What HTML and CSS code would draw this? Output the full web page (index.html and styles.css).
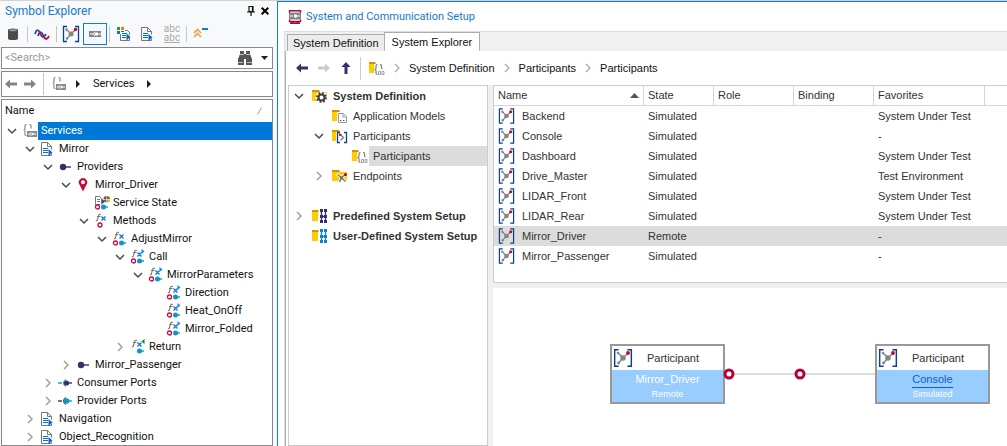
FILE: index.html
```html
<!DOCTYPE html>
<html lang="en">
<head>
<meta charset="utf-8">
<meta name="viewport" content="width=device-width, initial-scale=1">
<title>System and Communication Setup</title>
<link rel="stylesheet" href="styles.css">
</head>
<body>
<svg class="sprite" aria-hidden="true">
  <symbol id="open" viewBox="0 0 12 12"><path d="M2 4l4 4 4-4" fill="none" stroke="#4a4a4a" stroke-width="1.5"/></symbol>
  <symbol id="closed" viewBox="0 0 12 12"><path d="M4 2l4 4-4 4" fill="none" stroke="#a0a0a0" stroke-width="1.5"/></symbol>
  <symbol id="plug" viewBox="0 0 16 16"><rect x="2" y="5" width="12" height="6" fill="#858585"/><path d="M3 8h3M11 8h3" stroke="#fff"/><path d="M8 6a2.200 2.200 0 0 0 0 4" fill="none" stroke="#fff"/><circle cx="9.500" cy="8" r="1.700" fill="#fff"/></symbol>
  <symbol id="service" viewBox="0 0 16 16"><path d="M4.500 1.500H4q-1 0-1 1v3q0 1.500-1.500 1.500Q3 7 3 8.500v3q0 1 1 1h.5M7.500 1.500H8q1 0 1 1v3" fill="none" stroke="#8a8a8a" stroke-width="1.2"/><rect x="5" y="8" width="10" height="6" fill="#8a8a8a"/><path d="M6 11h2M12 11h2" stroke="#fff"/><path d="M9.500 9.500a1.500 1.500 0 0 0 0 3" fill="none" stroke="#fff" stroke-width=".8"/><circle cx="10.700" cy="11" r="1.200" fill="#fff"/></symbol>
  <symbol id="doc" viewBox="0 0 16 16"><path d="M1.500 1.500h6l4 4v3M11.500 13v1.500h-10v-13M7.500 1.500v4h4" fill="none" stroke="#777"/><path d="M3 7.500h5M3 9.500h5M3 11.500h5" stroke="#0078d0"/><path d="M8.500 8v7l4-3.500z" fill="#0b62c4"/></symbol>
  <symbol id="provider" viewBox="0 0 16 16"><circle cx="5" cy="8" r="3.200" fill="#34316b"/><path d="M5 8h8" stroke="#34316b" stroke-width="1.400"/></symbol>
  <symbol id="pin" viewBox="0 0 16 16"><path d="M7 14.500L3.700 8a4.200 4.200 0 1 1 6.600 0z" fill="#c80a38"/><circle cx="7" cy="5.300" r="2" fill="#fff"/></symbol>
  <symbol id="ring" viewBox="0 0 16 16"><circle cx="3.500" cy="12" r="2" fill="#fff" stroke="#c80a45" stroke-width="1.300"/></symbol>
  <symbol id="dot" viewBox="0 0 16 16"><circle cx="9.500" cy="12" r="2.500" fill="#0b98c8"/><path d="M8 12h6" stroke="#0b98c8" stroke-width="1.400"/></symbol>
  <symbol id="fx" viewBox="0 0 16 16"><path d="M7 1.500q-2-1-2.500 1.300L3.500 6.500q-.5 1.700-1.700 1.200M3 3.500h3.500" fill="none" stroke="#777" stroke-width="1.100"/><path d="M7.500 3.500l4 4M11.500 3.500l-4 4" stroke="#1979ca" stroke-width="1.400"/></symbol>
  <symbol id="state" viewBox="0 0 16 16"><path d="M6 9.500H1.500v-8h4l2 2v6M3 4.500h3M3 6.500h3" fill="none" stroke="#777"/><path d="M8 4v5l3-2.500z" fill="#444"/><path d="M12.500 1v3h-3a3 3 0 0 1 3-3z" fill="#e22"/><path d="M13 1v3h3a3 3 0 0 0-3-3z" fill="#2a9a2a"/><path d="M12.500 7.500v-3h-3a3 3 0 0 0 3 3z" fill="#1979ca"/><path d="M13 7.500v-3h3a3 3 0 0 1-3 3z" fill="#fa0"/><use href="#ring"/><use href="#dot"/></symbol>
  <symbol id="method" viewBox="0 0 16 16"><use href="#fx"/><circle cx="6" cy="12" r="2" fill="#fff" stroke="#c80a45" stroke-width="1.300"/></symbol>
  <symbol id="call" viewBox="0 0 16 16"><use href="#fx"/><use href="#ring"/><use href="#dot"/></symbol>
  <symbol id="param" viewBox="0 0 16 16"><use href="#call"/><path d="M11.500 0v5l3-2.500z" fill="#0090f0"/></symbol>
  <symbol id="return" viewBox="0 0 16 16"><use href="#fx"/><use href="#dot"/><path d="M14.500 0v5l-3-2.500z" fill="#078a07"/></symbol>
  <symbol id="cport" viewBox="0 0 16 16"><path d="M0 8h4" stroke="#0b98c8" stroke-width="1.400"/><path d="M8 4.500a3.700 3.700 0 0 0 0 7" fill="none" stroke="#0b98c8"/><circle cx="8.500" cy="8" r="2.600" fill="#34316b"/><path d="M8 8h6" stroke="#34316b" stroke-width="1.400"/></symbol>
  <symbol id="pport" viewBox="0 0 16 16"><path d="M0 8h4" stroke="#34316b" stroke-width="1.400"/><path d="M8 4.500a3.700 3.700 0 0 0 0 7" fill="none" stroke="#34316b"/><circle cx="8.500" cy="8" r="2.800" fill="#0b98c8"/><path d="M8 8h6" stroke="#0b98c8" stroke-width="1.400"/></symbol>
  <symbol id="part" viewBox="0 0 18 18"><path d="M5 1.500H1.500v15H5M13 1.500h3.500v15H13" fill="none" stroke="#0b3f91" stroke-width="1.300"/><path d="M4.500 4.500L9 8.700l-4 5M9 8.700l4.500-4" fill="none" stroke="#858585" stroke-width="1.300"/><circle cx="9" cy="9" r="2.500" fill="#858585"/><circle cx="4.500" cy="4.500" r="1.200" fill="#858585"/><circle cx="5" cy="13.500" r="1.300" fill="#858585"/><circle cx="13.500" cy="4.500" r="1.700" fill="#c0052f"/></symbol>
  <symbol id="folder" viewBox="0 0 16 16"><path d="M0 2h7l1 2h7v9H0z" fill="#fc0"/><path d="M0 2h7l1 2H0z" fill="#cb9500"/></symbol>
  <symbol id="half" viewBox="0 0 16 16"><path d="M0 2h6v11H0z" fill="#fc0"/><path d="M0 2h6l1 2H0z" fill="#cb9500"/></symbol>
  <symbol id="fgear" viewBox="0 0 16 16"><use href="#folder"/><circle cx="9.500" cy="9.500" r="6" fill="#fff"/><circle cx="9.500" cy="9.500" r="4.600" fill="none" stroke="#444" stroke-width="2" stroke-dasharray="1.800 1.810"/><circle cx="9.500" cy="9.500" r="3" fill="none" stroke="#444" stroke-width="2.200"/></symbol>
  <symbol id="fmodel" viewBox="0 0 16 16"><use href="#folder"/><path d="M5 4h11v11H5z" fill="#fff"/><path d="M6.500 5.500h5l3 3v6h-8z" fill="#fff" stroke="#999"/><path d="M11 5.500V9h3.500" fill="none" stroke="#999"/><path d="M8 12h1.500v1H8zM11 12h1.500v1H11z" fill="#555"/></symbol>
  <symbol id="fpart" viewBox="0 0 16 16"><use href="#folder"/><path d="M4 4h12v11H4z" fill="#fff"/><path d="M8 4.500H5.500v10H8M12 4.500h2.500v10H12" fill="none" stroke="#0b3f91" stroke-width="1.300"/><path d="M8 6.500l3.500 3-3 3" fill="none" stroke="#888" stroke-width="1.500"/><circle cx="8.200" cy="6.700" r="1.300" fill="#c0052f"/></symbol>
  <symbol id="fbrace" viewBox="0 0 16 16"><use href="#half"/><path d="M5 4h10v11H5z" fill="#fff"/><path d="M8.500 4.500q-1.500 0-1.500 1.500v2q0 1-1 1.500 1 .5 1 1.500v2q0 1.500 1.500 1.500M11 4.500q1.500 0 1.500 1.500v1.500q0 1 1 1.500" fill="none" stroke="#8a8a8a" stroke-width="1.300"/><path d="M9.500 11.500h2v3h-2zM13 11.500h2v3h-2z" fill="none" stroke="#999" stroke-width=".9"/></symbol>
  <symbol id="fend" viewBox="0 0 16 16"><use href="#folder"/><path d="M5 6l4.500 3.500L13 7M9.500 9.500L7.500 14M9.500 9.500l4.500 4" stroke="#fff" stroke-width="3" fill="none"/><path d="M5.500 6.500l4 3L14 6M9.500 9.500L7.500 14M9.500 9.500l4 4" stroke="#777" stroke-width="1.400" fill="none"/><circle cx="9.500" cy="10" r="1.700" fill="#777"/><circle cx="13.500" cy="6.500" r="1.600" fill="#c0052f"/></symbol>
  <symbol id="fnet" viewBox="0 0 16 16"><use href="#half"/><path d="M9.500 2v13M13.500 2v13M8 8.500h7" stroke="currentColor" stroke-width="1.300"/><path d="M8 1h3v3H8zM12 1h3v3h-3zM8 7h3v3H8zM12 7h3v3h-3zM8 12h3v3H8zM12 12h3v3h-3z" fill="currentColor"/></symbol>
  <symbol id="arrow" viewBox="0 0 12 12"><path d="M0 6l5-4.500v3h7v3H5v3z" fill="currentColor"/></symbol>
  <symbol id="sep" viewBox="0 0 8 12"><path d="M2 2l4 4-4 4" fill="none" stroke="#aaa" stroke-width="1.300"/></symbol>
  <symbol id="tri" viewBox="0 0 8 8"><path d="M2 0v8l4-4z" fill="#1c1c2c"/></symbol>
</svg>

<main class="app">
  <aside class="explorer">
    <header class="explorer-title">
      <h2>Symbol Explorer</h2>
      <button class="bare" aria-label="Pin"><svg width="8" height="10" viewBox="0 0 8 10"><path d="M2 .5h4v5H2zM0 6h8M4 6v4M5.500.5v5" fill="none" stroke="#111" stroke-width="1.200"/></svg></button>
      <button class="bare" aria-label="Close"><svg width="8" height="8" viewBox="0 0 8 8"><path d="M.7.700l6.600 6.600M7.300.7L.7 7.300" stroke="#000" stroke-width="2"/></svg></button>
    </header>
    <div class="tools">
      <button class="tool" aria-label="Database"><svg width="16" height="16" viewBox="0 0 16 16"><path d="M3 4q0-1.500 5-1.500T13 4v8.500q0 1.500-5 1.500t-5-1.500z" fill="#4a4a4a"/><ellipse cx="8" cy="4.200" rx="4" ry="1" fill="#999"/></svg></button>
      <i class="rule"></i>
      <button class="tool" aria-label="Signals"><svg width="16" height="16" viewBox="0 0 16 16"><path d="M4 10c2-6 4-4 5.500 0s3.500 4 5.500 0" fill="none" stroke="#c0052f" stroke-width="1.800"/><path d="M1 8c2-6 4-4 5.500 0s3.500 4 5.500 0" fill="none" stroke="#1456a5" stroke-width="1.800"/></svg></button>
      <i class="rule"></i>
      <button class="tool" aria-label="Participants"><svg width="18" height="18"><use href="#part"/></svg></button>
      <button class="tool pressed" aria-label="Services" aria-pressed="true"><svg width="16" height="16"><use href="#plug"/></svg></button>
      <i class="rule"></i>
      <button class="tool" aria-label="Grouped definitions"><svg width="16" height="16" viewBox="0 0 16 16"><path d="M4.500 8v6.500h9V12M9 4.500h2.500l2 2V9" fill="none" stroke="#777"/><path d="M1 1h3v3H1z" fill="#2a9a2a"/><path d="M5 1h3v3H5z" fill="#f08000"/><path d="M1 5h3v3H1z" fill="#0078d0"/><path d="M5 5.500h3M6 7.500h5M6 9.500h4M6 11.500h4" stroke="#0078d0"/><path d="M10.500 7.500v7l4-3.500z" fill="#0b62c4"/></svg></button>
      <button class="tool" aria-label="Definitions"><svg width="16" height="16"><use href="#doc"/></svg></button>
      <button class="tool abc" aria-label="Display names"><span>abc</span><span class="under">abc</span></button>
      <i class="rule"></i>
      <button class="tool" aria-label="Collapse all"><svg width="18" height="16" viewBox="0 0 18 16"><path d="M2 7l3.500-3.500L9 7M2 11l3.500-3.500L9 11" fill="none" stroke="#f8a040" stroke-width="1.700"/><path d="M10 2h6v2h-6z" fill="#1979ca"/></svg></button>
    </div>
    <div class="search">
      <input type="text" aria-label="Search" placeholder="&lt;Search&gt;">
      <button class="bare" aria-label="Find"><svg width="16" height="14" viewBox="0 0 16 14"><path d="M3 0h4v3h2V0h4v3l2 5v6H9V8H7v6H1V8l2-5z" fill="#555"/><path d="M3 3.500h4M9 3.500h4M1 11.500h5M10 11.500h5" stroke="#bbb"/></svg></button>
      <button class="bare" aria-label="Search options"><svg width="8" height="4" viewBox="0 0 8 4"><path d="M0 0h7L3.500 4z" fill="#222"/></svg></button>
    </div>
    <nav class="path" aria-label="Symbol path">
      <button class="bare" aria-label="Back"><svg class="gray" width="12" height="12"><use href="#arrow"/></svg></button>
      <button class="bare" aria-label="Forward"><svg class="gray flip" width="12" height="12"><use href="#arrow"/></svg></button>
      <i class="rule"></i>
      <svg width="16" height="16"><use href="#service"/></svg>
      <svg width="8" height="8"><use href="#tri"/></svg>
      <a href="#services">Services</a>
      <svg width="8" height="8"><use href="#tri"/></svg>
    </nav>
    <section class="symbols">
      <header><span>Name</span><svg width="5" height="8" viewBox="0 0 5 8"><path d="M.5 7.500l4-7" stroke="#999"/></svg></header>
      <ul class="tree">
        <li><div class="node picked" id="services"><button class="bare twist" aria-label="Collapse Services"><svg><use href="#open"/></svg></button><svg class="icon"><use href="#service"/></svg><span>Services</span></div>
        <ul>
          <li><div class="node"><button class="bare twist" aria-label="Collapse Mirror"><svg><use href="#open"/></svg></button><svg class="icon"><use href="#doc"/></svg><span>Mirror</span></div>
          <ul>
            <li><div class="node"><button class="bare twist" aria-label="Collapse Providers"><svg><use href="#open"/></svg></button><svg class="icon"><use href="#provider"/></svg><span>Providers</span></div>
            <ul>
              <li><div class="node"><button class="bare twist" aria-label="Collapse Mirror_Driver"><svg><use href="#open"/></svg></button><svg class="icon"><use href="#pin"/></svg><span>Mirror_Driver</span></div>
              <ul>
                <li><div class="node"><i class="twist"></i><svg class="icon"><use href="#state"/></svg><span>Service State</span></div></li>
                <li><div class="node"><button class="bare twist" aria-label="Collapse Methods"><svg><use href="#open"/></svg></button><svg class="icon"><use href="#method"/></svg><span>Methods</span></div>
                <ul>
                  <li><div class="node"><button class="bare twist" aria-label="Collapse AdjustMirror"><svg><use href="#open"/></svg></button><svg class="icon"><use href="#call"/></svg><span>AdjustMirror</span></div>
                  <ul>
                    <li><div class="node"><button class="bare twist" aria-label="Collapse Call"><svg><use href="#open"/></svg></button><svg class="icon"><use href="#param"/></svg><span>Call</span></div>
                    <ul>
                      <li><div class="node"><button class="bare twist" aria-label="Collapse MirrorParameters"><svg><use href="#open"/></svg></button><svg class="icon"><use href="#param"/></svg><span>MirrorParameters</span></div>
                      <ul>
                        <li><div class="node"><i class="twist"></i><svg class="icon"><use href="#param"/></svg><span>Direction</span></div></li>
                        <li><div class="node"><i class="twist"></i><svg class="icon"><use href="#param"/></svg><span>Heat_OnOff</span></div></li>
                        <li><div class="node"><i class="twist"></i><svg class="icon"><use href="#param"/></svg><span>Mirror_Folded</span></div></li>
                      </ul></li>
                    </ul></li>
                    <li><div class="node"><button class="bare twist" aria-label="Expand Return"><svg><use href="#closed"/></svg></button><svg class="icon"><use href="#return"/></svg><span>Return</span></div></li>
                  </ul></li>
                </ul></li>
              </ul></li>
              <li><div class="node"><button class="bare twist" aria-label="Expand Mirror_Passenger"><svg><use href="#closed"/></svg></button><svg class="icon"><use href="#provider"/></svg><span>Mirror_Passenger</span></div></li>
            </ul></li>
            <li><div class="node"><button class="bare twist" aria-label="Expand Consumer Ports"><svg><use href="#closed"/></svg></button><svg class="icon"><use href="#cport"/></svg><span>Consumer Ports</span></div></li>
            <li><div class="node"><button class="bare twist" aria-label="Expand Provider Ports"><svg><use href="#closed"/></svg></button><svg class="icon"><use href="#pport"/></svg><span>Provider Ports</span></div></li>
          </ul></li>
          <li><div class="node"><button class="bare twist" aria-label="Expand Navigation"><svg><use href="#closed"/></svg></button><svg class="icon"><use href="#doc"/></svg><span>Navigation</span></div></li>
          <li><div class="node"><button class="bare twist" aria-label="Expand Object_Recognition"><svg><use href="#closed"/></svg></button><svg class="icon"><use href="#doc"/></svg><span>Object_Recognition</span></div></li>
        </ul></li>
      </ul>
    </section>
  </aside>

  <section class="setup">
    <header class="setup-title">
      <svg width="14" height="14" viewBox="0 0 14 14"><path d="M1.500 3V.7h11V3M1.500 9.500v2h11v-2M4.500 11.500v2M9.500 11.500v2M2 13.300h10" fill="none" stroke="#a00a3c" stroke-width="1.400"/><path d="M1 2.500h12v7H1z" fill="#858585"/><path d="M2 6h3M9 6h3" stroke="#fff"/><circle cx="7.500" cy="6" r="1.700" fill="#fff"/></svg>
      <h1>System and Communication Setup</h1>
    </header>
    <div class="work">
      <div class="tabs" role="tablist">
        <button class="tab" role="tab" aria-selected="false">System Definition</button>
        <button class="tab current" role="tab" aria-selected="true">System Explorer</button>
      </div>
      <div class="page">
        <nav class="crumbs" aria-label="Breadcrumb">
          <div class="moves">
            <button class="bare" aria-label="Back"><svg class="navy" width="12" height="12"><use href="#arrow"/></svg></button>
            <button class="bare" aria-label="Forward"><svg class="pale flip" width="12" height="12"><use href="#arrow"/></svg></button>
            <button class="bare" aria-label="Up"><svg class="navy up" width="12" height="12"><use href="#arrow"/></svg></button>
          </div>
          <i class="rule"></i>
          <svg width="16" height="16"><use href="#fbrace"/></svg>
          <svg width="8" height="12"><use href="#sep"/></svg>
          <a href="#definition">System Definition</a>
          <svg width="8" height="12"><use href="#sep"/></svg>
          <a href="#participants">Participants</a>
          <svg width="8" height="12"><use href="#sep"/></svg>
          <a href="#list">Participants</a>
        </nav>
        <div class="panes">
          <ul class="tree folders">
            <li><div class="node strong" id="definition"><button class="bare twist" aria-label="Collapse System Definition"><svg><use href="#open"/></svg></button><svg class="icon"><use href="#fgear"/></svg><span>System Definition</span></div>
            <ul>
              <li><div class="node"><i class="twist"></i><svg class="icon"><use href="#fmodel"/></svg><span>Application Models</span></div></li>
              <li><div class="node" id="participants"><button class="bare twist" aria-label="Collapse Participants"><svg><use href="#open"/></svg></button><svg class="icon"><use href="#fpart"/></svg><span>Participants</span></div>
              <ul><li><div class="node picked"><i class="twist"></i><svg class="icon"><use href="#fbrace"/></svg><span>Participants</span></div></li></ul></li>
              <li><div class="node"><button class="bare twist" aria-label="Expand Endpoints"><svg><use href="#closed"/></svg></button><svg class="icon"><use href="#fend"/></svg><span>Endpoints</span></div></li>
            </ul></li>
            <li class="spaced"><div class="node strong"><button class="bare twist" aria-label="Expand Predefined System Setup"><svg><use href="#closed"/></svg></button><svg class="icon navy"><use href="#fnet"/></svg><span>Predefined System Setup</span></div></li>
            <li><div class="node strong"><i class="twist"></i><svg class="icon blue"><use href="#fnet"/></svg><span>User-Defined System Setup</span></div></li>
          </ul>
          <div class="detail">
            <div class="list" id="list">
              <table>
                <colgroup><col class="c-name"><col class="c-state"><col class="c-mid"><col class="c-mid"><col class="c-fav"><col></colgroup>
                <thead><tr><th><div class="sorted">Name<svg width="9" height="5" viewBox="0 0 9 5"><path d="M0 5h9L4.500 0z" fill="#555"/></svg></div></th><th>State</th><th>Role</th><th>Binding</th><th>Favorites</th><td></td></tr></thead>
                <tbody>
                  <tr><td><div class="cell"><svg><use href="#part"/></svg>Backend</div></td><td>Simulated</td><td></td><td></td><td>System Under Test</td><td></td></tr>
                  <tr><td><div class="cell"><svg><use href="#part"/></svg>Console</div></td><td>Simulated</td><td></td><td></td><td>-</td><td></td></tr>
                  <tr><td><div class="cell"><svg><use href="#part"/></svg>Dashboard</div></td><td>Simulated</td><td></td><td></td><td>System Under Test</td><td></td></tr>
                  <tr><td><div class="cell"><svg><use href="#part"/></svg>Drive_Master</div></td><td>Simulated</td><td></td><td></td><td>Test Environment</td><td></td></tr>
                  <tr><td><div class="cell"><svg><use href="#part"/></svg>LIDAR_Front</div></td><td>Simulated</td><td></td><td></td><td>System Under Test</td><td></td></tr>
                  <tr><td><div class="cell"><svg><use href="#part"/></svg>LIDAR_Rear</div></td><td>Simulated</td><td></td><td></td><td>System Under Test</td><td></td></tr>
                  <tr class="picked"><td><div class="cell"><svg><use href="#part"/></svg>Mirror_Driver</div></td><td>Remote</td><td></td><td></td><td>-</td><td></td></tr>
                  <tr><td><div class="cell"><svg><use href="#part"/></svg>Mirror_Passenger</div></td><td>Simulated</td><td></td><td></td><td>-</td><td></td></tr>
                </tbody>
              </table>
            </div>
            <div class="canvas">
              <svg class="wire" width="155" height="12" viewBox="0 0 155 12"><path d="M5 6h150" stroke="#ddd" stroke-width="2"/><circle cx="9" cy="6" r="4" fill="#fff" stroke="#b7002f" stroke-width="3"/><circle cx="80" cy="6" r="4" fill="#fff" stroke="#b7002f" stroke-width="3"/></svg>
              <article class="box first"><header><svg><use href="#part"/></svg><span>Participant</span></header><div class="body"><b>Mirror_Driver</b><small>Remote</small></div></article>
              <article class="box second"><header><svg><use href="#part"/></svg><span>Participant</span></header><div class="body"><a href="#console">Console</a><small>Simulated</small></div></article>
            </div>
          </div>
        </div>
      </div>
    </div>
  </section>
</main>
</body>
</html>
```
FILE: styles.css
```css
* { box-sizing: border-box; }

body {
  margin: 0;
  background: #f8f9fa;
  color: #111;
  font: 11px/18px Roboto, sans-serif;
  overflow: hidden;
}

h1, h2, ul { margin: 0; padding: 0; font-size: inherit; font-weight: 400; }
ul { list-style: none; }
a { color: inherit; text-decoration: none; }
svg { display: block; flex: none; }
.sprite { position: absolute; width: 0; height: 0; }

button { font: inherit; color: inherit; }
.bare { display: grid; place-items: center; flex: none; padding: 0; border: 0; background: none; }

.gray { color: #858585; }
.navy { color: #34316b; }
.pale { color: #c8c8d6; }
.blue { color: #0f80d8; }
.flip { transform: rotate(180deg); }
.up { transform: rotate(90deg); }

.app {
  display: grid;
  grid-template-columns: 273px minmax(0, 1fr);
  gap: 4px;
  height: 100vh;
  border-top: 1px solid #d2d2d2;
}

/* Symbol explorer */
.explorer { display: flex; flex-direction: column; gap: 2px; min-width: 0; min-height: 0; padding-left: 1px; }
.explorer-title { display: flex; align-items: center; gap: 6px; height: 19px; padding: 0 4px; }
.explorer-title h2 { flex: 1; color: #1979ca; font-size: 12px; }

.tools { display: flex; align-items: center; height: 23px; }
.tool { display: grid; place-items: center; flex: none; width: 24px; height: 22px; padding: 0; border: 0; background: none; }
.tool.pressed { border: 1px solid #1979ca; background: #f2f8fd; }
.abc { align-content: center; color: #aaa; font-size: 10px; line-height: 9px; }
.abc .under { border-bottom: 1px solid #aaa; }
.rule { flex: none; width: 1px; height: 16px; margin: 0 2px; background: #c4c8cc; }

.search, .path, .symbols { background: #fff; border: 1px solid #85898e; }
.search { display: flex; align-items: center; gap: 8px; height: 22px; padding: 0 3px; }
.search input { flex: 1; min-width: 0; padding: 0; border: 0; outline: 0; background: none; font: inherit; }
.search input::placeholder { color: #999; opacity: 1; }
.path { display: flex; align-items: center; gap: 7px; height: 26px; padding: 0 3px; }
.path .rule { height: 22px; margin: 0; }
.path a { padding: 0 4px; }

.symbols { flex: 1; min-height: 0; overflow: hidden; }
.symbols > header { display: flex; align-items: center; justify-content: space-between; height: 22px; padding: 0 10px 0 3px; }

.tree ul { padding-left: 18px; }
.node { display: flex; align-items: center; height: 18px; padding-left: 4px; white-space: nowrap; }
.twist { flex: none; width: 12px; height: 12px; margin-right: 4px; }
.twist svg { width: 12px; height: 12px; }
.icon { width: 16px; height: 16px; }
.node span { flex: 1; padding-left: 3px; }
.node.picked span { background: #0078d7; color: #fff; }

/* Setup window */
.setup {
  display: flex;
  flex-direction: column;
  min-width: 0;
  min-height: 0;
  padding-left: 6px;
  background: #fff;
  border: 1px solid #1979ca;
  border-width: 1px 0 0 1px;
}
.setup-title { display: flex; align-items: center; gap: 4px; height: 29px; padding-left: 4px; color: #1979ca; }
.work {
  display: flex;
  flex: 1;
  flex-direction: column;
  min-height: 0;
  background: #f0f0f0;
  border: 1px solid #dcdcdc;
  border-width: 1px 0 0 1px;
  font: 11px/20px "Liberation Sans", Arial, sans-serif;
}
.tabs { display: flex; align-items: flex-end; height: 19px; padding-left: 2px; }
.tab { height: 17px; padding: 0 5px; border: 1px solid #acacac; border-width: 1px 0 0 1px; background: #ececec; line-height: 16px; }
.tab.current { height: 19px; padding: 0 7px; border-right-width: 1px; background: #fff; line-height: 18px; }
.page { display: flex; flex: 1; flex-direction: column; min-height: 0; padding-left: 2px; background: #fff; border-left: 1px solid #b4b4b4; }

.crumbs, .moves { display: flex; align-items: center; gap: 8px; }
.crumbs { height: 34px; padding: 0 8px; }
.moves { gap: 10px; }
.crumbs .rule { height: 23px; margin: 0; background: #ccc; }

.panes { display: grid; flex: 1; grid-template-columns: 200px minmax(0, 1fr); gap: 5px; min-height: 0; background: #f0f0f0; color: #333; }
.folders { background: #fff; border: 1px solid #ccc; }
.folders ul { padding-left: 20px; }
.folders .node { height: 20px; }
.folders .twist { margin-right: 7px; }
.folders span { padding-left: 5px; }
.folders .picked span { margin-left: 1px; padding-left: 4px; background: #dcdcdc; color: inherit; }
.strong { font-weight: 700; }
.spaced { margin-top: 20px; }

.detail { display: flex; flex-direction: column; gap: 5px; min-width: 0; min-height: 0; }
.list { flex: none; padding-bottom: 16px; background: #fff; border: 1px solid #ccc; border-right: 0; }
table { width: 100%; table-layout: fixed; border-collapse: separate; border-spacing: 0; }
.c-name { width: 150px; }
.c-state { width: 70px; }
.c-mid { width: 80px; }
.c-fav { width: 111px; }
th, td { height: 20px; padding: 0 4px; text-align: left; font-weight: 400; white-space: nowrap; }
thead th, thead td { border-bottom: 1px solid #d5d5d5; line-height: 19px; }
th { border-right: 1px solid #d5d5d5; }
.sorted { display: flex; align-items: center; justify-content: space-between; }
.cell { display: flex; align-items: center; gap: 7px; }
.cell svg { width: 17px; height: 18px; }
.picked td { background: #dcdcdc; }

/* Diagram */
.canvas { position: relative; flex: 1; min-height: 0; background: #fff; }
.box { position: absolute; top: 56px; width: 115px; border: 2px solid #999; background: #9cf; text-align: center; }
.first { left: 117px; }
.second { left: 382px; }
.wire { position: absolute; top: 80px; left: 227px; z-index: 1; }
.box header { display: grid; grid-template-columns: 20px 1fr; align-items: center; height: 24px; padding: 0 10px 0 1px; background: #fff; }
.box header svg { width: 20px; height: 20px; }
.body { display: flex; flex-direction: column; align-items: center; height: 32px; padding-top: 1px; color: #fff; }
.body b { font-weight: 400; line-height: 17px; }
.body small { font-size: 9px; line-height: 12px; }
.body a { border-bottom: 1px solid #0b62c4; color: #0b62c4; line-height: 16px; }
```
